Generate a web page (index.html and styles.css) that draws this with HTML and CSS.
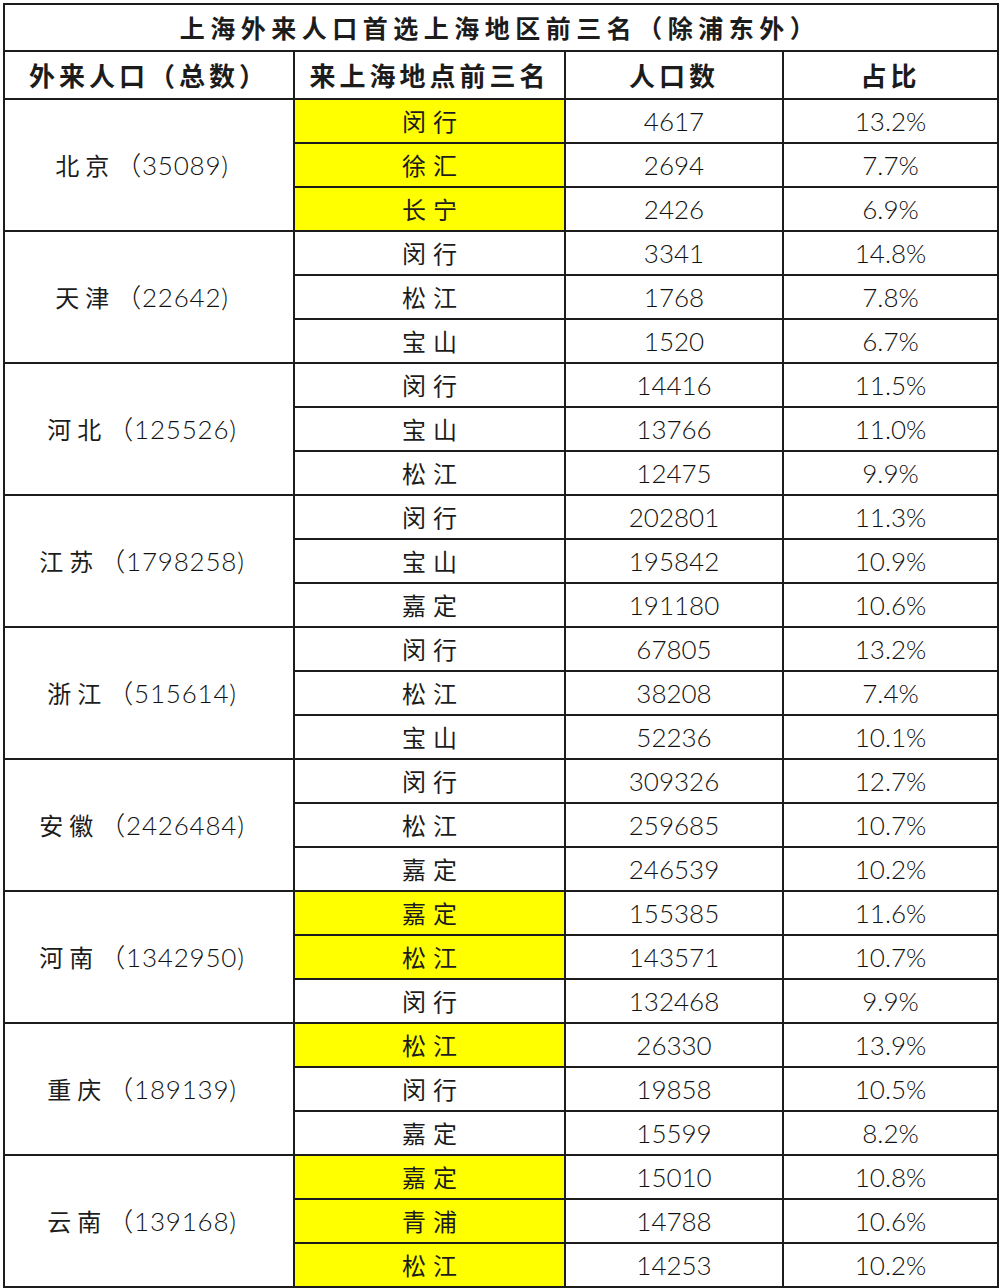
FILE: index.html
```html
<!DOCTYPE html>
<html lang="zh-CN">
<head>
<meta charset="utf-8">
<title>上海外来人口首选上海地区前三名</title>
<link rel="stylesheet" href="styles.css">
</head>
<body>
<table class="tbl">
<colgroup><col class="c1"><col class="c2"><col class="c3"><col class="c4"></colgroup>
<tr class="title"><td colspan="4">上海外来人口首选上海地区前三名（除浦东外）</td></tr>
<tr class="head"><td>外来人口（总数）</td><td>来上海地点前三名</td><td>人口数</td><td>占比</td></tr>

<tr><td rowspan="3" class="prov">北京<span class="n">（35089)</span></td><td class="area hl">闵行</td><td class="num">4617</td><td class="num">13.2%</td></tr>
<tr><td class="area hl">徐汇</td><td class="num">2694</td><td class="num">7.7%</td></tr>
<tr><td class="area hl">长宁</td><td class="num">2426</td><td class="num">6.9%</td></tr>

<tr><td rowspan="3" class="prov">天津<span class="n">（22642)</span></td><td class="area">闵行</td><td class="num">3341</td><td class="num">14.8%</td></tr>
<tr><td class="area">松江</td><td class="num">1768</td><td class="num">7.8%</td></tr>
<tr><td class="area">宝山</td><td class="num">1520</td><td class="num">6.7%</td></tr>

<tr><td rowspan="3" class="prov">河北<span class="n">（125526)</span></td><td class="area">闵行</td><td class="num">14416</td><td class="num">11.5%</td></tr>
<tr><td class="area">宝山</td><td class="num">13766</td><td class="num">11.0%</td></tr>
<tr><td class="area">松江</td><td class="num">12475</td><td class="num">9.9%</td></tr>

<tr><td rowspan="3" class="prov">江苏<span class="n">（1798258)</span></td><td class="area">闵行</td><td class="num">202801</td><td class="num">11.3%</td></tr>
<tr><td class="area">宝山</td><td class="num">195842</td><td class="num">10.9%</td></tr>
<tr><td class="area">嘉定</td><td class="num">191180</td><td class="num">10.6%</td></tr>

<tr><td rowspan="3" class="prov">浙江<span class="n">（515614)</span></td><td class="area">闵行</td><td class="num">67805</td><td class="num">13.2%</td></tr>
<tr><td class="area">松江</td><td class="num">38208</td><td class="num">7.4%</td></tr>
<tr><td class="area">宝山</td><td class="num">52236</td><td class="num">10.1%</td></tr>

<tr><td rowspan="3" class="prov">安徽<span class="n">（2426484)</span></td><td class="area">闵行</td><td class="num">309326</td><td class="num">12.7%</td></tr>
<tr><td class="area">松江</td><td class="num">259685</td><td class="num">10.7%</td></tr>
<tr><td class="area">嘉定</td><td class="num">246539</td><td class="num">10.2%</td></tr>

<tr><td rowspan="3" class="prov">河南<span class="n">（1342950)</span></td><td class="area hl">嘉定</td><td class="num">155385</td><td class="num">11.6%</td></tr>
<tr><td class="area hl">松江</td><td class="num">143571</td><td class="num">10.7%</td></tr>
<tr><td class="area">闵行</td><td class="num">132468</td><td class="num">9.9%</td></tr>

<tr><td rowspan="3" class="prov">重庆<span class="n">（189139)</span></td><td class="area hl">松江</td><td class="num">26330</td><td class="num">13.9%</td></tr>
<tr><td class="area">闵行</td><td class="num">19858</td><td class="num">10.5%</td></tr>
<tr><td class="area">嘉定</td><td class="num">15599</td><td class="num">8.2%</td></tr>

<tr><td rowspan="3" class="prov">云南<span class="n">（139168)</span></td><td class="area hl">嘉定</td><td class="num">15010</td><td class="num">10.8%</td></tr>
<tr><td class="area hl">青浦</td><td class="num">14788</td><td class="num">10.6%</td></tr>
<tr><td class="area hl">松江</td><td class="num">14253</td><td class="num">10.2%</td></tr>
</table>
</body>
</html>
```

FILE: styles.css
```css
html, body {
  margin: 0;
  padding: 0;
  background: #ffffff;
}
body {
  padding: 3px 0 0 3px;
  font-family: "Noto Sans CJK SC", sans-serif;
  color: #1c1c1c;
}
.tbl {
  border-collapse: collapse;
  table-layout: fixed;
  width: 994px;
}
.c1 { width: 290px; }
.c2 { width: 271px; }
.c3 { width: 218px; }
.c4 { width: 215px; }
.tbl td {
  border: 2px solid #1c1c1c;
  padding: 0;
  text-align: center;
  vertical-align: middle;
  height: 42px;
  line-height: 1;
}
.title td {
  height: 45px;
  font-size: 25px;
  font-weight: 700;
  letter-spacing: 5.5px;
  padding-right: 2px;
}
.head td {
  height: 46px;
  font-size: 26px;
  font-weight: 700;
  letter-spacing: 4px;
}
.prov {
  font-size: 24px;
  letter-spacing: 6px;
  padding-right: 14px !important;
}
.prov .n {
  font-family: Lato, "Noto Sans CJK SC", sans-serif;
  font-size: 26px;
  font-weight: 300;
  letter-spacing: 0.8px;
  color: #111111;
}
.area {
  font-size: 24px;
  letter-spacing: 7px;
  text-indent: 7px;
}
.area.hl {
  background: #ffff00;
}
.num {
  font-family: Lato, sans-serif;
  font-size: 26px;
  font-weight: 300;
  color: #111111;
}
```
